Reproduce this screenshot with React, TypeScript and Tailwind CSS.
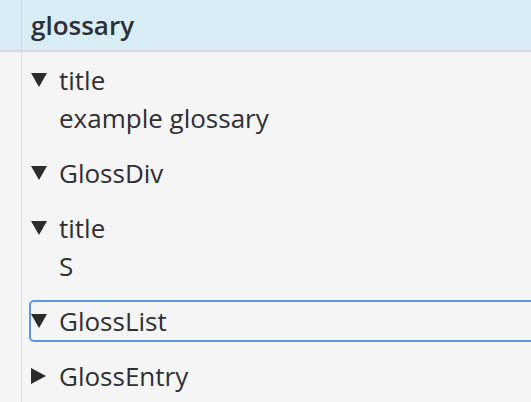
import React from "react";

const font = { fontFamily: '"Open Sans", "Noto Sans", sans-serif' };

function Tri({ open }: { open: boolean }) {
  return open ? (
    <svg width="16" height="14" viewBox="0 0 16 14" className="block">
      <polygon points="0,0 16,0 8,14" fill="#2b2b2b" />
    </svg>
  ) : (
    <svg width="15" height="16" viewBox="0 0 15 16" className="block">
      <polygon points="0,0 15,8 0,16" fill="#2b2b2b" />
    </svg>
  );
}

function Row({
  label,
  open = true,
  focused = false,
}: {
  label: string;
  open?: boolean;
  focused?: boolean;
}) {
  return (
    <div
      className={
        "flex h-[38px] w-[600px] items-center " +
        (focused ? "rounded-[3px] outline-2 outline-[#5e95e6]" : "")
      }
    >
      <span className="flex w-[28px] items-center">
        <Tri open={open} />
      </span>
      <span>{label}</span>
    </div>
  );
}

export default function App() {
  return (
    <div
      className="h-[402px] w-[531px] overflow-hidden bg-[#f5f5f5] text-[26px] text-[#2f2f35]"
      style={font}
    >
      <div className="flex h-[52px] border-b-2 border-[#d8d8de] bg-[#d9edf6]">
        <div className="w-[22px] shrink-0 border-r border-[#c9dde6]" />
        <div className="flex items-center pl-[9px] text-[26px] font-semibold text-[#2a2f38]">
          glossary
        </div>
      </div>
      <div className="flex h-full">
        <div className="w-[22px] shrink-0 border-r border-[#dcdcdc]" />
        <div className="flex flex-col gap-[17px] pl-[9px] pt-[9px]">
          <div>
            <Row label="title" />
            <div className="flex h-[38px] items-center pl-[28px]">example glossary</div>
          </div>
          <Row label="GlossDiv" />
          <div>
            <Row label="title" />
            <div className="flex h-[38px] items-center pl-[28px]">S</div>
          </div>
          <Row label="GlossList" focused />
          <Row label="GlossEntry" open={false} />
        </div>
      </div>
    </div>
  );
}
